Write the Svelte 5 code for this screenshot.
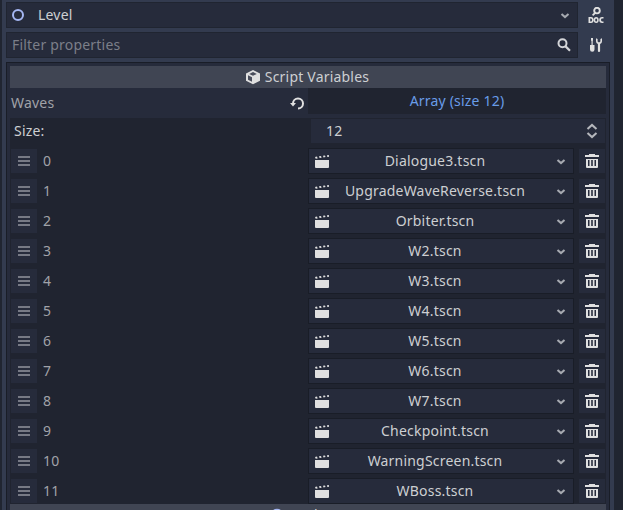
<script>
  const scenes = [
    'Dialogue3.tscn', 'UpgradeWaveReverse.tscn', 'Orbiter.tscn', 'W2.tscn',
    'W3.tscn', 'W4.tscn', 'W5.tscn', 'W6.tscn', 'W7.tscn',
    'Checkpoint.tscn', 'WarningScreen.tscn', 'WBoss.tscn'
  ];
</script>

{#snippet chevron()}
  <svg class="chev" width="10" height="8" viewBox="0 0 10 8"><path d="M1.500 2.900 L5 6.100 L8.500 2.900" /></svg>
{/snippet}

<div class="window">
  <div class="dock">
    <div class="toolbar">
      <div class="field node">
        <svg width="12" height="12" viewBox="0 0 12 12"><circle cx="6" cy="6" r="5" fill="none" stroke="#a5b7f3" stroke-width="2" /></svg>
        <span>Level</span>
        {@render chevron()}
      </div>
      <div class="tool">
        <svg width="16" height="16" viewBox="0 0 16 16" fill="#e0e0e0">
          <circle cx="9" cy="3.6" r="2.8" fill="none" stroke="#e0e0e0" stroke-width="1.9" />
          <path d="M6.6 4.900 L8.200 6.300 L5.2 9 L4 7.8Z" />
          <path fill-rule="evenodd" d="M.5 10H3q2.6 0 2.6 2.9T3 16H.5ZM2.2 11.5v3H3q1 0 1-1.5T3 11.5ZM8.2 10a2.5 3 0 0 1 0 6a2.5 3 0 0 1 0-6ZM8.2 11.5a1 1.5 0 0 0 0 3a1 1.5 0 0 0 0-3Z" />
          <path d="M15.5 10v1.6h-1.3q-1.2 0-1.2 1.4t1.2 1.4h1.3V16h-1.3q-3 0-3-3t3-3Z" />
        </svg>
      </div>
    </div>
    <div class="toolbar">
      <div class="field filter">
        <span>Filter properties</span>
        <svg width="14" height="14" viewBox="0 0 14 14" fill="none" stroke="#d4d5d8"><circle cx="5.5" cy="5.2" r="4" stroke-width="2" /><path d="M8.3 8.1 L13 12.8" stroke-width="2.200" /></svg>
      </div>
      <div class="tool">
        <svg width="16" height="16" viewBox="0 0 16 16" fill="#e0e0e0">
          <path d="M3 1h2v2.200l-.3 1V8H6.500v4.500a2.200 2.200 0 0 1-4.500 0V8h1.500V4.200L3 3.200Z" />
          <path d="M8 1.200v3A3 3 0 0 0 9.900 7v7a1.100 1.100 0 0 0 2.200 0V7a3 3 0 0 0 1.900-2.800v-3l-1.600.7V4.500L11 5.500 9.600 4.500V1.900Z" />
        </svg>
      </div>
    </div>

    <div class="inspector">
      <div class="category">
        <svg width="16" height="16" viewBox="0 0 16 16">
          <path fill="#e0e0e0" d="M8 1 L15 4.500V11.700L8 15.200L1 11.700V4.500Z" />
          <path fill="#404553" d="M8 3 L11.800 4.900L8 6.800L4.200 4.900ZM3 6.200L7 8.200V12.700L3 10.700Z" opacity=".95" />
        </svg>
        <span>Script Variables</span>
      </div>
      <div class="property">
        <span class="name">Waves</span>
        <svg class="revert" width="16" height="16" viewBox="0 0 16 16">
          <path d="M4 8.500A5 5 0 1 1 9 13.500" fill="none" stroke="#e0e0e0" stroke-width="2" />
          <path d="M1 8h6l-3 3.500Z" fill="#e0e0e0" />
        </svg>
        <div class="array">Array (size 12)</div>
      </div>
      <div class="items">
        <div class="size">
          <span>Size:</span>
          <div class="spin">
            <span>12</span>
            <svg width="12" height="16" viewBox="0 0 12 16"><path d="M1.500 6 L6 1.900 L10.500 6 M1.500 10 L6 14.100 L10.500 10" /></svg>
          </div>
        </div>
        {#each scenes as scene, i}
          <div class="row">
            <div class="handle"><i></i><i></i><i></i></div>
            <span class="index">{i}</span>
            <div class="picker">
              <svg width="16" height="16" viewBox="0 0 16 16" fill="#e0e0e0">
                <path d="M1 7h14v7a1 1 0 0 1-1 1H2a1 1 0 0 1-1-1Z" />
                <path d="M1 3.900l2-.3 .7 1.800-2 .3ZM5 3.300l2-.3 .6 1.700-2 .3ZM9 2.700l2-.3 .5 1.700-2 .3ZM13 2.200l1.800-.3 .3 1.800-1.800.3Z" />
              </svg>
              <span>{scene}</span>
              {@render chevron()}
            </div>
            <div class="trash">
              <svg width="14" height="14" viewBox="0 0 14 14" fill="#e0e0e0">
                <path d="M4 0h6v1h4v2H0V1h4Z" />
                <path fill-rule="evenodd" d="M1 5h12v8q0 1-1 1H2q-1 0-1-1ZM3 6v6h1.500V6ZM6.200 6v6h1.600V6ZM9.500 6v6H11V6Z" />
              </svg>
            </div>
          </div>
        {/each}
      </div>
      <div class="category">
        <svg width="16" height="16" viewBox="0 0 16 16"><circle cx="8" cy="8" r="5.300" fill="none" stroke="#a5b7f3" stroke-width="2" /></svg>
        <span>Node2D</span>
      </div>
    </div>
  </div>
</div>

<style>
  .window {
    box-sizing: border-box;
    width: 623px;
    height: 510px;
    overflow: hidden;
    padding-left: 2px;
    background: #202531;
    font: 14px/20px "Noto Sans", sans-serif;
    letter-spacing: 0.2px;
    color: #cdcfd2;
    white-space: nowrap;
  }
  svg { display: block; flex: none; }
  .dock {
    box-sizing: border-box;
    width: 612px;
    height: 510px;
    padding: 2px 4px 0;
    overflow: hidden;
    background: #333b4f;
  }
  .toolbar { display: flex; margin-bottom: 4px; }
  .field {
    box-sizing: border-box;
    display: flex;
    align-items: center;
    width: 572px;
    height: 26px;
    border: 1px solid #202531;
    background: #262b3b;
  }
  .node { padding: 0 7px 0 5px; }
  .node span { margin-left: 14px; flex: 1; }
  .filter { padding: 0 6px 0 5px; color: #7c7f89; }
  .filter span { flex: 1; }
  .tool { display: flex; align-items: center; margin-left: 10px; }
  .chev path { fill: none; stroke: #a6a9b0; stroke-width: 2; }
  .inspector {
    box-sizing: border-box;
    width: 604px;
    height: 470px;
    border: 1px solid #191d27;
    padding: 3px;
    background: #262b3b;
  }
  .category {
    box-sizing: border-box;
    display: flex;
    justify-content: center;
    align-items: center;
    gap: 4px;
    height: 22px;
    padding-right: 2px;
    background: #404553;
  }
  .property { display: flex; align-items: center; height: 30px; }
  .name { flex: 1; padding-left: 1px; color: #a0a2a8; }
  .revert { margin-right: 3px; }
  .array {
    width: 298px;
    height: 26px;
    margin-bottom: 4px;
    line-height: 26px;
    text-align: center;
    color: #699ce8;
    background: #202430;
  }
  .items { height: 386px; background: #202430; }
  .size { display: flex; height: 30px; padding: 1px 1px 0 4px; box-sizing: border-box; }
  .size > span { width: 297px; line-height: 24px; }
  .spin {
    display: flex;
    align-items: center;
    justify-content: space-between;
    box-sizing: border-box;
    width: 294px;
    height: 24px;
    padding: 0 7px 0 15px;
    background: #262b3b;
  }
  .spin path { fill: none; stroke: #b5b7bc; stroke-width: 2; }
  .row { display: flex; align-items: center; height: 26px; margin-bottom: 4px; padding: 0 1px; }
  .handle {
    display: flex;
    flex-direction: column;
    align-items: center;
    justify-content: center;
    gap: 2px;
    width: 26px;
    height: 24px;
    background: #262b3b;
  }
  .handle i { width: 12px; height: 2px; background: #777a85; }
  .index { flex: 1; padding-left: 6px; color: #a0a2a8; }
  .picker {
    box-sizing: border-box;
    display: flex;
    align-items: center;
    width: 266px;
    height: 26px;
    margin-right: 5px;
    padding: 0 7px 0 5px;
    border: 1px solid #191d27;
    background: #262b3b;
  }
  .picker span { flex: 1; padding-right: 16px; text-align: center; }
  .trash { display: flex; align-items: center; justify-content: center; width: 26px; height: 24px; background: #262b3b; }
</style>
